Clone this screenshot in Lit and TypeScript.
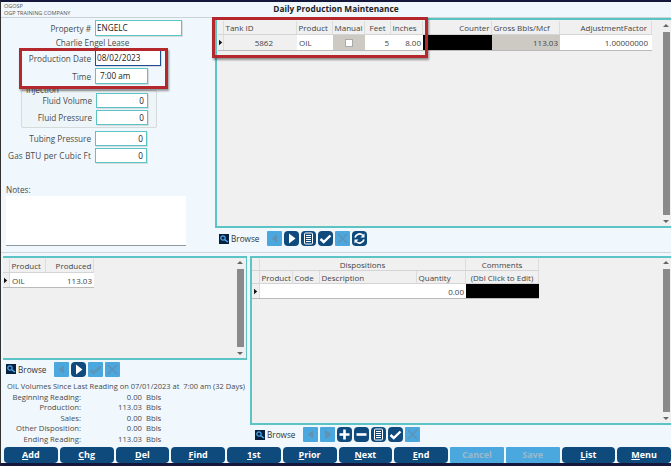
import { LitElement, html, css, svg } from "lit";
import { customElement } from "lit/decorators.js";

const icons: Record<string, unknown> = {
  left: svg`<path d="M10 3.5v8L4.5 7.5z" fill="currentColor"/>`,
  right: svg`<path d="M5 2.5v10l6.5-5z" fill="currentColor"/>`,
  list: svg`<rect x="3.5" y="2" width="8" height="11" rx="1" fill="none" stroke="currentColor"/><path d="M5 4.5h5M5 6.5h5M5 8.5h5M5 10.5h5" stroke="currentColor"/>`,
  check: svg`<path d="M2.5 8l3.2 3L12.5 4.5" fill="none" stroke="currentColor" stroke-width="2.4"/>`,
  x: svg`<path d="M3 3l9 9M12 3l-9 9" fill="none" stroke="currentColor" stroke-width="1.6"/>`,
  plus: svg`<path d="M7.5 2.5v10M2.5 7.5h10" fill="none" stroke="currentColor" stroke-width="2.6"/>`,
  minus: svg`<path d="M2.5 7.5h10" fill="none" stroke="currentColor" stroke-width="2.6"/>`,
  refresh: svg`<path d="M3 6.5A4.7 4.7 0 0 1 11 4.5M12 8.5A4.7 4.7 0 0 1 4 10.5" fill="none" stroke="currentColor" stroke-width="1.7"/><path d="M12.5 2.5v4h-4zM2.5 12.5v-4h4z" fill="currentColor"/>`,
};

const tool = (name: string, off = false) =>
  html`<span class="tb ${off ? "off" : ""}"><svg viewBox="0 0 15 15" width="15" height="15">${icons[name]}</svg></span>`;

const browse = (...btns: unknown[]) => html`
  <span class="bicon"><svg viewBox="0 0 10 10" width="10" height="10">
    <rect width="10" height="10" fill="#06203f"/>
    <circle cx="4" cy="4" r="2.2" fill="none" stroke="#4aa8ee" stroke-width="1.2"/>
    <path d="M5.6 5.6L9 8" stroke="#4aa8ee" stroke-width="1.4"/>
  </svg></span>
  <span class="btxt">Browse</span>
  <span class="tools">${btns}</span>`;

const marker = html`<svg class="mark" viewBox="0 0 5 7" width="4" height="7"><path d="M0 0l4 3.5L0 7z" fill="#111"/></svg>`;

const scrollbar = html`<div class="sb"><span class="arr up"></span><span class="thumb"></span><span class="arr down"></span></div>`;

@customElement("app-root")
export class AppRoot extends LitElement {
  static styles = css`
    :host { display: block; width: 671px; height: 466px; overflow: hidden; }
    * { box-sizing: border-box; }
    .app {
      position: relative; width: 671px; height: 466px; background: #f0f8fe;
      border-top: 2px solid #15183a; border-bottom: 3px solid #15183a; border-left: 1px solid #333;
      font: 8.2px/11px "Open Sans", "Noto Sans", sans-serif; color: #4a4a4a;
      display: grid; grid-template-rows: 16px 232px 6px 191px 16px;
    }
    .head { display: grid; grid-template-columns: 1fr auto 1fr; border-bottom: 1px solid #c9d2d6; align-items: start; }
    .co { font-size: 5.5px; line-height: 6.5px; padding: 1px 0 0 3px; color: #555; }
    .title { font-weight: 700; font-size: 8.3px; line-height: 14px; color: #222; }
    .top { display: grid; grid-template-columns: 214px 1fr; }
    .form { display: flex; flex-direction: column; padding-top: 2px; }
    .row { display: flex; align-items: center; gap: 4px; height: 16px; }
    .row > label { width: 90px; text-align: right; white-space: nowrap; }
    .row > label.wide { letter-spacing: 0.15px; }
    .row.s { height: 15px; }
    .inp { height: 16px; background: #fff; border: 1px solid #5cc4c4; color: #222; padding: 0 1px; line-height: 14px; box-shadow: 1px 1px 0 #d5dde0; }
    .w86 { width: 87px; } .w66 { width: 66px; border: 1.5px solid #1f4f8f; } .w53 { width: 53px; padding-left: 4px; }
    .num { width: 52px; height: 15px; line-height: 13px; text-align: right; padding-right: 3px; }
    .lease { height: 14px; line-height: 14px; width: 183px; text-align: center; }
    .mt2 { margin-top: 2px; } .mt3 { margin-top: 3px; }
    .group { position: relative; margin: 6px 0 0 20px; width: 136px; height: 38px; border: 1px solid #d5dadd; border-radius: 2px; background: #eef5f9; padding-top: 2px; }
    .group .legend { position: absolute; left: 4px; top: -6px; line-height: 10px; }
    .group .row > label { width: 70px; }
    .notes-l { margin: 21px 0 0 5px; height: 11px; line-height: 11px; }
    .notes { margin: 1px 0 0 5px; width: 180px; height: 50px; background: #fff; border-bottom: 1px solid #8e9aa0; }
    .pane { display: flex; flex-direction: column; min-height: 0; min-width: 0; }
    .box { flex: 1; min-height: 0; background: #f0f0f0; border: solid #5cc4c4; position: relative; display: flex; justify-content: space-between; }
    .tr .box { border-width: 2px 0 2px 2px; padding: 1px 0 0 1px; }
    .bar { display: flex; align-items: center; height: 22px; flex: none; padding-bottom: 1px; }
    .bicon { display: block; width: 10px; height: 10px; margin-left: 4px; }
    .bicon svg, .tb svg { display: block; }
    .btxt { margin-left: 2px; width: 36px; color: #333; }
    .tools { display: flex; gap: 2px; }
    .tb { width: 15px; height: 15px; border-radius: 4px; background: #0f4a7d; color: #fff; display: block; }
    .tb.off { background: #4aa8de; color: #5e93b5; border-radius: 1px; }
    .g { display: grid; align-self: flex-start; background: #fff; color: #444; border-bottom: 1px solid #bbb; font-size: 8px; }
    .h { background: #f0f0f0; border-right: 1px solid #dcdcdc; border-bottom: 1px solid #d4d4d4; padding: 0 1.5px; white-space: nowrap; overflow: hidden; display: flex; align-items: center; }
    .c { background: #fff; padding: 0 2px; white-space: nowrap; display: flex; align-items: center; overflow: hidden; }
    .r { justify-content: flex-end; } .mid { justify-content: center; }
    .ind { background: #f0f0f0; padding: 0; justify-content: center; border-right: 1px solid #dcdcdc; }
    .grey { background: #cdcac4; } .blk { background: #000; }
    .soft { background: #f0f0f0; padding-right: 24px; }
    .pr4 { padding-right: 4px; }
    .cb { width: 8px; height: 8px; background: #fff; border: 1px solid #aaa; display: block; }
    .g1 { grid-template-columns: 6px 73px 36px 32px 26px 32px 69px 68px 92px; grid-template-rows: 14px 15px; }
    .g2 { grid-template-columns: 7px 36px 48px; grid-template-rows: 14px 14px; margin: 1px 0 0 0; }
    .g3 { grid-template-columns: 8px 33px 27px 97px 49px 73px; grid-template-rows: 12px 13px 14px; margin: 1px 0 0 0; }
    .span4 { grid-column: span 4; justify-content: center; }
    .sb { flex: none; width: 10px; align-self: stretch; background: #f0f0f0; display: flex; flex-direction: column; align-items: center; padding: 3px 0; }
    .thumb { flex: 1; width: 7px; background: #8a8a8a; margin: 5px 0; }
    .arr { width: 0; height: 0; border: 3px solid transparent; flex: none; }
    .up { border-top: 0; border-bottom: 3px solid #666; } .down { border-bottom: 0; border-top: 3px solid #666; }
    .sep { border-top: 1px solid #d0d6da; margin-top: 2px; }
    .low { display: grid; grid-template-columns: 247px 1fr; }
    .ll { padding-left: 2px; width: 246px; }
    .ll .box { flex: none; height: 104px; border-width: 2px 1px 2px 0; padding-right: 1px; }
    .ll .bar { height: 19px; }
    .ll .bicon { margin-left: 3px; }
    .stats { padding: 1px 0 0 4px; font-size: 7.7px; }
    .stats .ttl { white-space: nowrap; line-height: 12px; height: 12px; font-size: 7.5px; }
    .stat { display: grid; grid-template-columns: 74px 61px 1fr; height: 10.4px; line-height: 10.4px; }
    .stat > :first-child { text-align: right; white-space: nowrap; } .stat > :nth-child(2) { text-align: right; } .stat > :nth-child(3) { padding-left: 4px; }
    .lr { padding-left: 2px; }
    .lr .box { flex: none; height: 169px; border-width: 2px 0 2px 2px; }
    .lr .bar { height: 20px; }
    .lr .bicon { margin-left: 5px; }
    .btns { display: grid; grid-template-columns: repeat(12, 1fr); gap: 2px; padding: 0 0 0 3px; }
    .bt { background: #0f4a7d; color: #fff; font-weight: 700; font-size: 9px; line-height: 16px; text-align: center; border-radius: 4px; }
    .bt u { text-decoration: underline; }
    .bt.off { background: #4aa8de; color: #9cb9c9; border-radius: 1px; }
    .red { position: absolute; border: 3px solid #b3272d; box-shadow: 1px 2px 2px rgba(0,0,0,.4); pointer-events: none; }
    .red.a { left: 18px; top: 46px; width: 149px; height: 41px; }
    .red.b { left: 211px; top: 15px; width: 216px; height: 41px; }
  `;

  render() {
    return html`<div class="app">
      <div class="head">
        <div class="co">OGOSP<br />OGP TRAINING COMPANY</div>
        <div class="title">Daily Production Maintenance</div>
      </div>
      <div class="top">
        <div class="form">
          <div class="row"><label>Property #</label><div class="inp w86">ENGELC</div></div>
          <div class="lease">Charlie Engel Lease</div>
          <div class="row"><label>Production Date</label><div class="inp w66">08/02/2023</div></div>
          <div class="row mt2"><label>Time</label><div class="inp w53">7:00 am</div></div>
          <div class="group">
            <span class="legend">Injection</span>
            <div class="row s"><label>Fluid Volume</label><div class="inp num">0</div></div>
            <div class="row s mt2"><label>Fluid Pressure</label><div class="inp num">0</div></div>
          </div>
          <div class="row s mt3"><label>Tubing Pressure</label><div class="inp num">0</div></div>
          <div class="row s mt2"><label class="wide">Gas BTU per Cubic Ft</label><div class="inp num">0</div></div>
          <div class="notes-l">Notes:</div>
          <div class="notes"></div>
        </div>
        <div class="pane tr">
          <div class="box">
            <div class="g g1">
              <div class="h"></div><div class="h">Tank ID</div><div class="h">Product</div><div class="h">Manual</div><div class="h mid">Feet</div><div class="h">Inches</div><div class="h r">Counter</div><div class="h">Gross Bbls/Mcf</div><div class="h r pr4">AdjustmentFactor</div>
              <div class="c ind">${marker}</div><div class="c r soft">5862</div><div class="c">OIL</div><div class="c grey mid"><span class="cb"></span></div><div class="c r">5</div><div class="c r">8.00</div><div class="c blk"></div><div class="c grey r">113.03</div><div class="c r pr4">1.00000000</div>
            </div>
            ${scrollbar}
          </div>
          <div class="bar">${browse(tool("left", true), tool("right"), tool("list"), tool("check"), tool("x", true), tool("refresh"))}</div>
        </div>
      </div>
      <div class="sep"></div>
      <div class="low">
        <div class="pane ll">
          <div class="box">
            <div class="g g2">
              <div class="h"></div><div class="h">Product</div><div class="h r">Produced</div>
              <div class="c ind">${marker}</div><div class="c">OIL</div><div class="c r">113.03</div>
            </div>
            ${scrollbar}
          </div>
          <div class="bar">${browse(tool("left", true), tool("right"), tool("check", true), tool("x", true))}</div>
          <div class="stats">
            <div class="ttl">OIL Volumes Since Last Reading on 07/01/2023 at&nbsp; 7:00 am (32 Days)</div>
            <div class="stat"><span>Beginning Reading:</span><span>0.00</span><span>Bbls</span></div>
            <div class="stat"><span>Production:</span><span>113.03</span><span>Bbls</span></div>
            <div class="stat"><span>Sales:</span><span>0.00</span><span>Bbls</span></div>
            <div class="stat"><span>Other Disposition:</span><span>0.00</span><span>Bbls</span></div>
            <div class="stat"><span>Ending Reading:</span><span>113.03</span><span>Bbls</span></div>
          </div>
        </div>
        <div class="pane lr">
          <div class="box">
            <div class="g g3">
              <div class="h"></div><div class="h span4">Dispositions</div><div class="h mid">Comments</div>
              <div class="h"></div><div class="h">Product</div><div class="h">Code</div><div class="h">Description</div><div class="h">Quantity</div><div class="h mid">(Dbl Click to Edit)</div>
              <div class="c ind">${marker}</div><div class="c"></div><div class="c"></div><div class="c"></div><div class="c r">0.00</div><div class="c blk"></div>
            </div>
            ${scrollbar}
          </div>
          <div class="bar">${browse(tool("left", true), tool("right", true), tool("plus"), tool("minus"), tool("list"), tool("check"), tool("x", true))}</div>
        </div>
      </div>
      <div class="btns">
        <div class="bt"><u>A</u>dd</div><div class="bt"><u>C</u>hg</div><div class="bt"><u>D</u>el</div><div class="bt"><u>F</u>ind</div>
        <div class="bt"><u>1</u>st</div><div class="bt"><u>P</u>rior</div><div class="bt"><u>N</u>ext</div><div class="bt"><u>E</u>nd</div>
        <div class="bt off">Cancel</div><div class="bt off">Save</div><div class="bt"><u>L</u>ist</div><div class="bt"><u>M</u>enu</div>
      </div>
      <div class="red a"></div>
      <div class="red b"></div>
    </div>`;
  }
}
